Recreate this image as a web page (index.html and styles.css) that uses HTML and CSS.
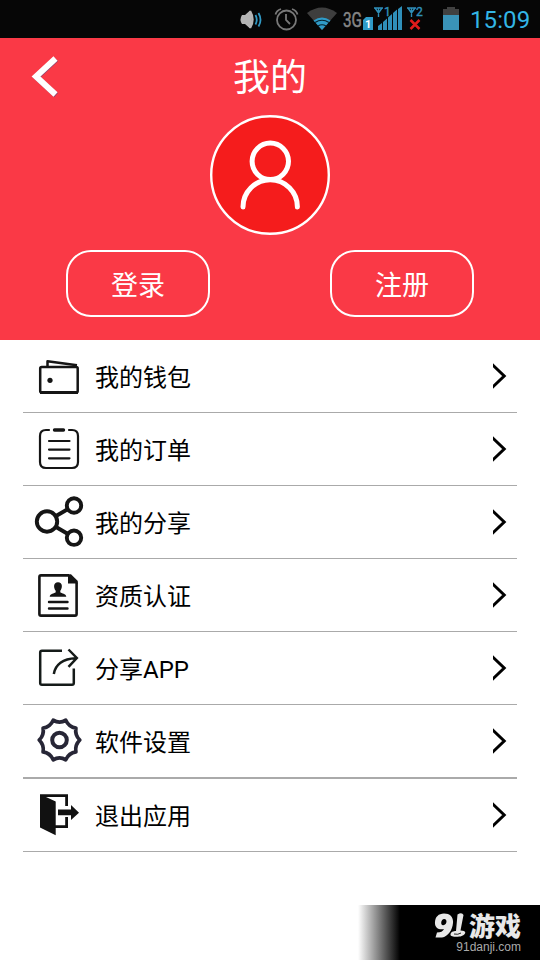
FILE: index.html
```html
<!DOCTYPE html>
<html lang="zh-CN">
<head>
<meta charset="utf-8">
<title>我的</title>
<link rel="stylesheet" href="styles.css">
</head>
<body>
<div class="screen">
  <div class="status">
    <svg class="status-icons" viewBox="230 0 235 38" width="235" height="38">
      <path d="M242 15h3l5-4.500q3.500 9 0 18l-5-4.500h-3q-3-4.500 0-9z" fill="#b4b4b4"/>
      <path d="M250 11q5 8.500 0 17" fill="none" stroke="#b4b4b4" stroke-width="2.400"/>
      <path d="M255.500 15q2.500 5 0 9.500M258.500 13q4 7 0 13.500" fill="none" stroke="#3199c4" stroke-width="1.800"/>
      <g fill="none" stroke="#787878" stroke-width="1.800"><circle cx="286.500" cy="20" r="9.500"/><path d="M286 14v6l4 4M275.500 14.500q1-4 5.500-5.500M292 9q4.500 1.500 5.500 5.500"/></g>
      <path d="M307 13q15-11 30 0L322 30z" fill="#3e3e3e"/>
      <path d="M313.500 20.500q8.500-6 17 0L322 30z" fill="#2f9bc8"/>
      <path d="M315 22.500q7-4.500 14 0M318 26q4-2.500 8 0" fill="none" stroke="#06202c" stroke-width="1.200"/>
      <text class="net" x="343" y="26.500" textLength="19" lengthAdjust="spacingAndGlyphs">3G</text>
      <path d="M363 20l3-3h7v13h-10z" fill="#2f9bc8"/>
      <text class="sim" x="365" y="28">1</text>
      <g fill="none" stroke="#2f8fb9" stroke-width="1.400"><path d="M374 8h9M375 8l3.500 5 3.500-5M378.500 8v9M407 8h9M408 8l3.500 5 3.500-5M411.500 8v9"/></g>
      <text class="ant" x="384" y="16">1</text><text class="ant" x="416" y="16">2</text>
      <path d="M378 26l4-3v7h-4zM383 22l4-3.500V30h-4zM388 17.500l4-3.500v16h-4zM393 13l4-3.500V30h-4zM398 9l4-3v24h-4z" fill="#2f8fb9"/>
      <path d="M410.500 20l9 9M419.500 20l-9 9" stroke="#e01b1b" stroke-width="2.500"/>
      <path d="M443 9h4V7h8v2h4v6h-16z" fill="#414141"/><path d="M443 15h16v15h-16z" fill="#3a93b8"/>
    </svg>
    <span class="clock">15:09</span>
  </div>

  <header class="hero">
    <div class="bar">
      <svg class="back" viewBox="30 50 30 50" width="30" height="50"><path d="M55.500 58.500L36 76.500 55.500 94.500" transform="translate(.6 .7)" fill="none" stroke="#8f4670" stroke-width="5.800"/><path d="M55.500 58.500L36 76.500 55.500 94.500" fill="none" stroke="#fff" stroke-width="6"/></svg>
      <h1>我的</h1>
    </div>
    <svg class="avatar" viewBox="0 0 120 120" width="120" height="120">
      <circle cx="60" cy="60" r="58.800" fill="#f51c1c" stroke="#fff" stroke-width="2.400"/>
      <g fill="none" stroke="#fff" stroke-width="5" stroke-linecap="round"><circle cx="60.300" cy="46.300" r="18.200"/><path d="M33 92a27.200 27.200 0 0 1 54.400 0"/></g>
    </svg>
    <div class="actions"><button>登录</button><button>注册</button></div>
  </header>

  <ul class="menu">
    <li>
      <svg class="icon" viewBox="23 340 72 72" width="72" height="72"><g fill="none" stroke="#151515" stroke-width="2.500" stroke-linejoin="round"><rect x="40.200" y="367" width="37.500" height="25.500" rx="1.500"/><path d="M47.500 366v-4.800l29.500 4"/></g><path d="M40 392.500h38" stroke="#151515" stroke-width="3"/><circle cx="50" cy="380.300" r="2.600" fill="#151515"/></svg>
      <span>我的钱包</span><svg class="go" viewBox="493 362 15 28" width="15" height="28"><path d="M491 363.300L504.200 376 491 388.700" fill="none" stroke="#000" stroke-width="3"/></svg>
    </li>
    <li>
      <svg class="icon" viewBox="23 413 72 72" width="72" height="72"><g fill="none" stroke="#151515" stroke-width="2.200"><path d="M49 430H46q-6 0-6 6v26q0 6 6 6h26q6 0 6-6v-26q0-6-6-6h-3M49 441h20.500M49 449.600h20.500M49 458.300h20.500" stroke-linecap="round"/></g><path d="M54.500 430h9" stroke="#151515" stroke-width="3.400" stroke-linecap="round"/></svg>
      <span>我的订单</span><svg class="go" viewBox="493 362 15 28" width="15" height="28"><path d="M491 363.300L504.200 376 491 388.700" fill="none" stroke="#000" stroke-width="3"/></svg>
    </li>
    <li>
      <svg class="icon" viewBox="23 486 72 72" width="72" height="72"><g fill="none" stroke="#151515" stroke-width="3.900"><circle cx="47" cy="521.500" r="10.200"/><circle cx="74" cy="505.500" r="7.200"/><circle cx="74" cy="537.700" r="7.200"/><path d="M56 516l12-7M56 527l12 7"/></g></svg>
      <span>我的分享</span><svg class="go" viewBox="493 362 15 28" width="15" height="28"><path d="M491 363.300L504.200 376 491 388.700" fill="none" stroke="#000" stroke-width="3"/></svg>
    </li>
    <li>
      <svg class="icon" viewBox="23 559 72 72" width="72" height="72"><path d="M69 575.400H41q-1.600 0-1.600 1.600v37q0 1.600 1.600 1.600h34q1.600 0 1.600-1.600v-31.500" fill="none" stroke="#151515" stroke-width="2.600"/><path d="M68 574.200h3l6.800 6.800v2.500H68z" fill="#151515"/><path d="M58 582.200c5 0 4.500 6 2.300 8.500v1.500c1.500 1.500 5.500 1 6 4.500H49.700c.5-3.500 4.500-3 6-4.500v-1.500c-2.200-2.500-2.700-8.500 2.300-8.500z" fill="#151515"/><path d="M49 602h18.500M49 608.500h18.500" stroke="#151515" stroke-width="2.400" stroke-linecap="round"/></svg>
      <span>资质认证</span><svg class="go" viewBox="493 362 15 28" width="15" height="28"><path d="M491 363.300L504.200 376 491 388.700" fill="none" stroke="#000" stroke-width="3"/></svg>
    </li>
    <li>
      <svg class="icon" viewBox="23 632 72 72" width="72" height="72"><g fill="none" stroke="#151b19" stroke-width="2.500"><path d="M62 650.700H42q-1.800 0-1.800 1.800v30.500q0 1.800 1.800 1.800h30q1.800 0 1.800-1.800v-14.500M53.800 674c1.500-9 9-15.500 22-15.800M68.500 649.500l8.300 8.500-8.300 8.800"/></g></svg>
      <span>分享APP</span><svg class="go" viewBox="493 362 15 28" width="15" height="28"><path d="M491 363.300L504.200 376 491 388.700" fill="none" stroke="#000" stroke-width="3"/></svg>
    </li>
    <li class="thick">
      <svg class="icon" viewBox="-36.500 -35 72 72" width="72" height="72"><g fill="none" stroke="#272636" stroke-width="3.700" stroke-linejoin="round"><path d="M20.300 0Q15.200 4.940 16.420 11.930Q9.400 12.940 6.270 19.800Q0 16-6.270 19.800Q-9.400 12.940-16.420 11.930Q-15.200 4.940-20.300 0Q-15.200-4.940-16.420-11.930Q-9.400-12.940-6.270-19.800Q0-16 6.270-19.800Q9.400-12.940 16.420-11.930Q15.200-4.940 20.300 0z"/><circle r="7.300" stroke-width="4"/></g></svg>
      <span>软件设置</span><svg class="go" viewBox="493 362 15 28" width="15" height="28"><path d="M491 363.300L504.200 376 491 388.700" fill="none" stroke="#000" stroke-width="3"/></svg>
    </li>
    <li>
      <svg class="icon" viewBox="23 779 72 72" width="72" height="72"><path d="M40 794.300h28V806h-2.800v-9H46l9.700 4.500v33.700L40 827.500zM55 825.300h10.200v-8.300h2.800v11H55zM58 809.500h13V805l8 7.700-8 7.300v-4.800H58z" fill="#111"/></svg>
      <span>退出应用</span><svg class="go" viewBox="493 362 15 28" width="15" height="28"><path d="M491 363.300L504.200 376 491 388.700" fill="none" stroke="#000" stroke-width="3"/></svg>
    </li>
  </ul>

  <footer class="mark">
    <div class="brand">
      <svg viewBox="434 913 32 25" width="32" height="25"><path fill-rule="evenodd" d="M444 913.500c6.500 0 9.500 4 9 9.500-.5 7-5 13.500-11 14.500h-6.500l1.500-5c3.500 0 6-1 7-3.500-5.500 1-9.500-1.500-9-7 .3-5 3.500-8.500 9-8.500zm.3 5.500c-3.300 0-4.300 6-1.300 6.300 4 .3 4.700-6.300 1.300-6.300zM457.500 914.500q4.500-2.500 6 .5l-3 15.500c3.500 0 5.500 1 4.500 3-2 4.500-15 4-14.500 1 0-2.500 3-3.500 5.500-3.500z" fill="#e8e8e8"/><path d="M454 934q4 1 7-1" fill="none" stroke="#222"/></svg>
      <b>游戏</b>
    </div>
    <span class="site">91danji.com</span>
  </footer>
</div>
</body>
</html>
```
FILE: styles.css
```css
* { box-sizing: border-box; }
body {
  margin: 0;
  background: #fff;
  font-family: Roboto, "Noto Sans CJK SC", sans-serif;
}
svg { display: block; flex: none; }
.screen {
  width: 540px;
  height: 960px;
  display: flex;
  flex-direction: column;
  overflow: hidden;
}
.status {
  height: 38px;
  flex: none;
  display: flex;
  justify-content: flex-end;
  background: #060606;
}
.clock {
  width: 75px;
  padding-left: 5px;
  font-size: 24px;
  line-height: 40px;
  letter-spacing: 0.1px;
  color: #33b5e5;
}
.net { font: 20px Roboto, sans-serif; fill: #858585; stroke: #858585; stroke-width: .5px; }
.sim { font: bold 11px Roboto, sans-serif; fill: #fff; }
.ant { font: 12px Roboto, sans-serif; fill: #2f8fb9; stroke: #2f8fb9; stroke-width: .4px; }
.hero {
  height: 302px;
  flex: none;
  display: flex;
  flex-direction: column;
  align-items: center;
  background: #fa3946;
  color: #fff;
}
.bar {
  width: 100%;
  height: 77px;
  display: grid;
  grid-template-columns: 60px 1fr 60px;
}
.back { margin: 12px 0 0 30px; }
h1 {
  margin: 0;
  font-size: 37px;
  font-weight: 400;
  line-height: 82px;
  text-align: center;
}
.actions {
  width: 408px;
  margin-top: 15px;
  display: flex;
  justify-content: space-between;
}
button {
  width: 144px;
  height: 67px;
  padding: 0 0 1px;
  border: 2px solid #fff;
  border-radius: 25px;
  background: none;
  color: #fff;
  font: 400 27px "Noto Sans CJK SC", sans-serif;
}
.menu {
  margin: 0;
  padding: 0 23px;
  list-style: none;
}
.menu li {
  height: 73px;
  display: flex;
  align-items: center;
  border-bottom: 1px solid #aaa;
  font-size: 24px;
  color: #000;
}
.menu .thick { height: 74px; border-bottom-width: 2px; }
.menu span { flex: 1; height: 72px; padding-top: 2px; line-height: 72px; }
.go { margin-right: 9px; }
.mark {
  width: 182px;
  height: 55px;
  margin: auto 0 0 auto;
  padding: 6px 19px 0 0;
  display: flex;
  flex-direction: column;
  align-items: flex-end;
  background: linear-gradient(90deg, #fff 0, #000 42px);
}
.brand { display: flex; align-items: center; gap: 3px; height: 29px; }
.brand b {
  font: 900 26px/26px "Noto Sans CJK SC", sans-serif;
  margin-top: -2px;
  color: #e8e8e8;
}
.site {
  font: 12px/14px "Liberation Sans", sans-serif;
  color: #aaa;
}
```
